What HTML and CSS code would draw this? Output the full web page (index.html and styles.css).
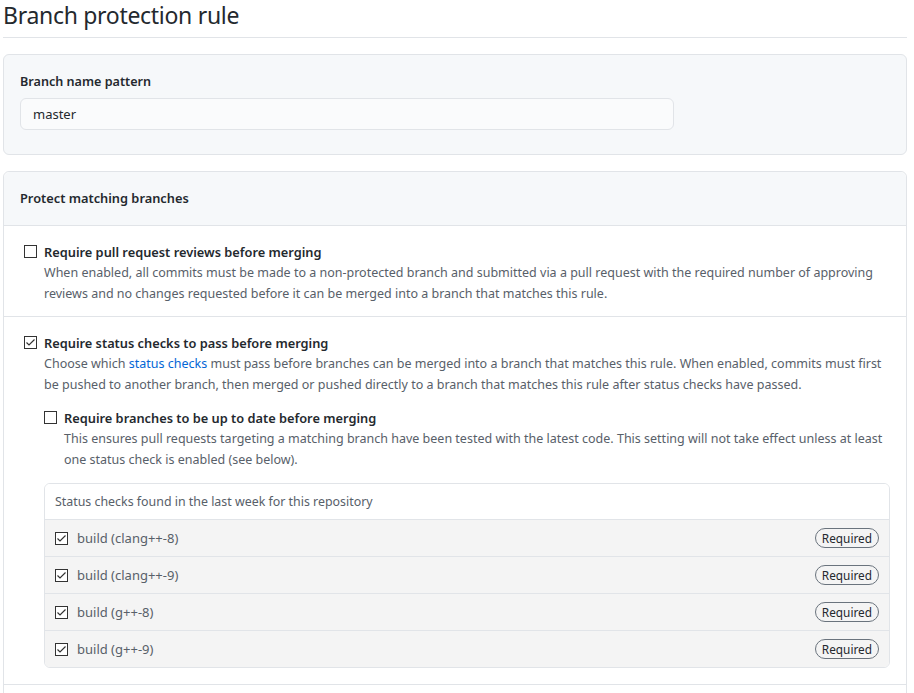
FILE: index.html
```html
<!DOCTYPE html>
<html>
<head>
<meta charset="utf-8">
<link rel="stylesheet" href="styles.css">
</head>
<body>
<div class="page">
  <h1 class="title">Branch protection rule</h1>

  <div class="box box-pattern">
    <label class="field-label">Branch name pattern</label>
    <div class="input">master</div>
  </div>

  <div class="box box-protect">
    <div class="box-header">Protect matching branches</div>

    <div class="item">
      <div class="check-row">
        <svg class="cb" width="13" height="13" viewBox="0 0 13 13"><rect x="0.5" y="0.5" width="12" height="12" fill="#fff" stroke="#333"/></svg>
        <div class="check-body">
          <div class="check-title">Require pull request reviews before merging</div>
          <p class="note">When enabled, all commits must be made to a non-protected branch and submitted via a pull request with the required number of approving reviews and no changes requested before it can be merged into a branch that matches this rule.</p>
        </div>
      </div>
    </div>

    <div class="item item-status">
      <div class="check-row">
        <svg class="cb" width="13" height="13" viewBox="0 0 13 13"><rect x="0.5" y="0.5" width="12" height="12" fill="#fff" stroke="#333"/><path d="M2.5 6.5 L5 9 L10.5 3.5" fill="none" stroke="#333" stroke-width="1.2"/></svg>
        <div class="check-body">
          <div class="check-title">Require status checks to pass before merging</div>
          <p class="note">Choose which <a class="link" href="#">status checks</a> must pass before branches can be merged into a branch that matches this rule. When enabled, commits must first be pushed to another branch, then merged or pushed directly to a branch that matches this rule after status checks have passed.</p>

          <div class="check-row nested">
            <svg class="cb" width="13" height="13" viewBox="0 0 13 13"><rect x="0.5" y="0.5" width="12" height="12" fill="#fff" stroke="#333"/></svg>
            <div class="check-body">
              <div class="check-title">Require branches to be up to date before merging</div>
              <p class="note">This ensures pull requests targeting a matching branch have been tested with the latest code. This setting will not take effect unless at least one status check is enabled (see below).</p>
            </div>
          </div>

          <div class="checks">
            <div class="checks-header">Status checks found in the last week for this repository</div>
            <div class="checks-row">
              <svg class="cb" width="13" height="13" viewBox="0 0 13 13"><rect x="0.5" y="0.5" width="12" height="12" fill="#fff" stroke="#333"/><path d="M2.5 6.5 L5 9 L10.5 3.5" fill="none" stroke="#333" stroke-width="1.2"/></svg>
              <span class="check-name">build (clang++-8)</span>
              <span class="badge">Required</span>
            </div>
            <div class="checks-row">
              <svg class="cb" width="13" height="13" viewBox="0 0 13 13"><rect x="0.5" y="0.5" width="12" height="12" fill="#fff" stroke="#333"/><path d="M2.5 6.5 L5 9 L10.5 3.5" fill="none" stroke="#333" stroke-width="1.2"/></svg>
              <span class="check-name">build (clang++-9)</span>
              <span class="badge">Required</span>
            </div>
            <div class="checks-row">
              <svg class="cb" width="13" height="13" viewBox="0 0 13 13"><rect x="0.5" y="0.5" width="12" height="12" fill="#fff" stroke="#333"/><path d="M2.5 6.5 L5 9 L10.5 3.5" fill="none" stroke="#333" stroke-width="1.2"/></svg>
              <span class="check-name">build (g++-8)</span>
              <span class="badge">Required</span>
            </div>
            <div class="checks-row">
              <svg class="cb" width="13" height="13" viewBox="0 0 13 13"><rect x="0.5" y="0.5" width="12" height="12" fill="#fff" stroke="#333"/><path d="M2.5 6.5 L5 9 L10.5 3.5" fill="none" stroke="#333" stroke-width="1.2"/></svg>
              <span class="check-name">build (g++-9)</span>
              <span class="badge">Required</span>
            </div>
          </div>
        </div>
      </div>
    </div>

    <div class="item">
      <div class="check-row">
        <svg class="cb" width="13" height="13" viewBox="0 0 13 13"><rect x="0.5" y="0.5" width="12" height="12" fill="#fff" stroke="#333"/></svg>
        <div class="check-body">
          <div class="check-title">Require signed commits</div>
          <p class="note">Commits pushed to matching branches must have verified signatures.</p>
        </div>
      </div>
    </div>
  </div>
</div>
</body>
</html>
```

FILE: styles.css
```css
html, body {
  margin: 0;
  padding: 0;
  background: #fff;
  overflow: hidden;
}
body {
  font-family: "Noto Sans", "Open Sans", sans-serif;
  color: #24292e;
}
.page {
  width: 904px;
  margin-left: 3px;
}
.title {
  margin: 0 0 16px 0;
  font-size: 23px;
  font-weight: 400;
  line-height: 30px;
  padding-bottom: 7px;
  border-bottom: 1px solid #e1e4e8;
  letter-spacing: -0.3px;
}
.box {
  border: 1px solid #e1e4e8;
  border-radius: 6px;
  margin-bottom: 16px;
}
.box-pattern {
  background: #f6f8fa;
  padding: 16px 16px 24px 16px;
  display: flex;
  flex-direction: column;
}
.field-label {
  font-size: 12.6px;
  font-weight: 600;
  line-height: 21px;
  margin-bottom: 6px;
}
.input {
  width: 654px;
  box-sizing: border-box;
  height: 32px;
  border: 1px solid #e1e4e8;
  border-radius: 6px;
  background: #fafbfc;
  padding: 0 12px;
  font-size: 13px;
  line-height: 31px;
  color: #24292e;
}
.box-protect {
  background: #fff;
}
.box-header {
  background: #f6f8fa;
  border-bottom: 1px solid #e1e4e8;
  border-radius: 6px 6px 0 0;
  padding: 16px;
  font-size: 12.8px;
  font-weight: 600;
  line-height: 21px;
}
.item {
  padding: 16px 16px 12px 20px;
  border-bottom: 1px solid #e1e4e8;
}
.item-status {
  padding-bottom: 16px;
}
.check-row {
  display: flex;
  align-items: flex-start;
}
.cb {
  flex: none;
  margin: 3px 7px 0 0;
  display: block;
}
.check-body {
  flex: 1;
  min-width: 0;
}
.check-title {
  font-size: 12.8px;
  font-weight: 600;
  line-height: 20px;
}
.note {
  margin: 0;
  font-size: 12.5px;
  line-height: 21px;
  color: #586069;
}
.link {
  color: #0366d6;
  text-decoration: none;
}
.nested {
  margin-top: 13px;
}
.checks {
  margin-top: 13px;
  border: 1px solid #e1e4e8;
  border-radius: 6px;
  overflow: hidden;
}
.checks-header {
  background: #fff;
  padding: 0 10px;
  height: 35px;
  line-height: 36px;
  font-size: 12.4px;
  color: #586069;
}
.checks-row {
  display: flex;
  align-items: center;
  height: 36px;
  border-top: 1px solid #e1e4e8;
  background: #f4f4f4;
  padding: 0 10px;
}
.checks-row .cb {
  margin: 0 9px 0 0;
}
.check-name {
  flex: 1;
  font-size: 13px;
  color: #586069;
}
.badge {
  font-size: 11.8px;
  line-height: 18px;
  padding: 0 6px;
  border: 1px solid #6a737d;
  border-radius: 10px;
  color: #24292e;
}
```
